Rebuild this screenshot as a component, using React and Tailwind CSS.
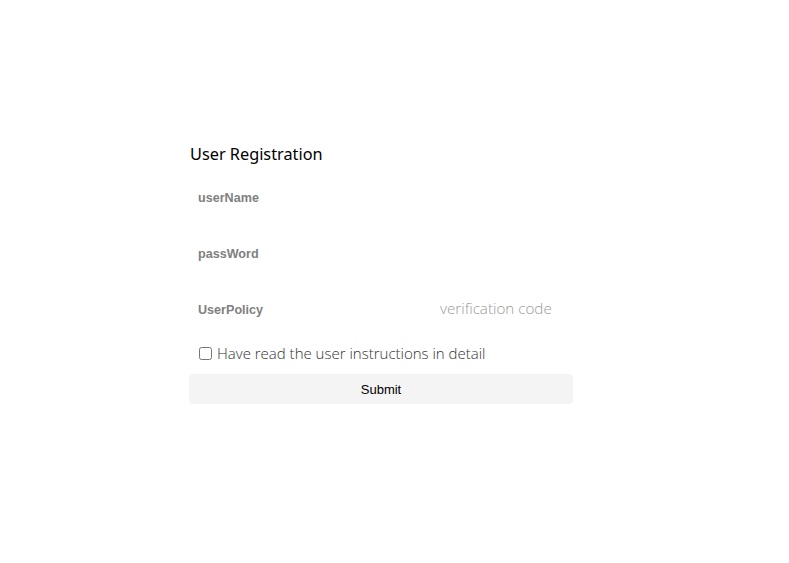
import React, { useState } from 'react';

const App = () => {
  const [agree, setAgree] = useState(false);
  const [code, setCode] = useState('');

  return (
    <div className="min-h-[563px] w-full bg-white pt-[141px] pl-[189px]">
      <div className="w-[384px]">
        {/* Titre */}
        <h1 className="h-[29px] pl-[1px] text-[16.3px] leading-[26px] text-black font-['Noto_Sans','Open_Sans',sans-serif]">
          User Registration
        </h1>

        {/* Champs */}
        <div className="flex h-[56px] items-center pl-[9px]">
          <span className="text-[12.6px] font-bold text-[#7f7f7f] font-['Liberation_Sans',Arial,sans-serif]">userName</span>
        </div>
        <div className="flex h-[56px] items-center pl-[9px]">
          <span className="text-[12.6px] font-bold text-[#7f7f7f] font-['Liberation_Sans',Arial,sans-serif]">passWord</span>
        </div>
        <div className="flex h-[56px] items-center pl-[9px]">
          <span className="w-[242px] text-[12.6px] font-bold text-[#7f7f7f] font-['Liberation_Sans',Arial,sans-serif]">UserPolicy</span>
          <input
            value={code}
            onChange={(e) => setCode(e.target.value)}
            placeholder="verification code"
            className="mb-[4px] w-[130px] bg-transparent text-[15.2px] font-light text-[#555] outline-none placeholder:text-[#9a9a9a] font-['Open_Sans','Noto_Sans',sans-serif]"
          />
        </div>

        {/* Case à cocher */}
        <label className="mt-[4px] flex h-[22px] items-center pl-[10px]">
          <input
            type="checkbox"
            checked={agree}
            onChange={(e) => setAgree(e.target.checked)}
            className="h-[13px] w-[13px]"
          />
          <span className="ml-[5px] text-[15px] font-light text-[#333] font-['Open_Sans','Noto_Sans',sans-serif]">
            Have read the user instructions in detail
          </span>
        </label>

        {/* Bouton */}
        <button className="mt-[10px] h-[30px] w-[384px] rounded-[4px] bg-[#f4f4f4] pt-[2px] text-[13px] leading-[28px] text-black font-['Liberation_Sans',Arial,sans-serif]">
          Submit
        </button>
      </div>
    </div>
  );
};

export default App;
